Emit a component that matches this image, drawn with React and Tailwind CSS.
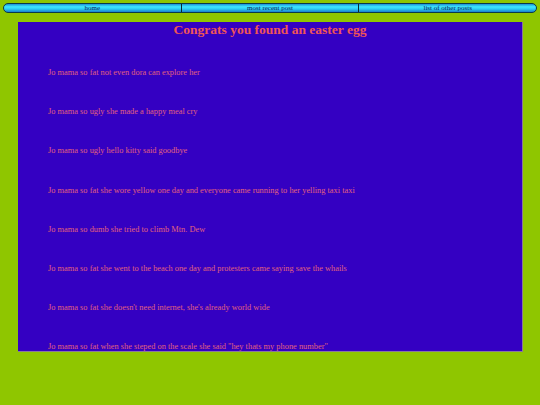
import React from 'react';

const LINKS = ['home', 'most recent post', 'list of other posts'];

const JOKES = [
  'Jo mama so fat not even dora can explore her',
  'Jo mama so ugly she made a happy meal cry',
  'Jo mama so ugly hello kitty said goodbye',
  'Jo mama so fat she wore yellow one day and everyone came running to her yelling taxi taxi',
  'Jo mama so dumb she tried to climb Mtn. Dew',
  'Jo mama so fat she went to the beach one day and protesters came saying save the whails',
  "Jo mama so fat she doesn't need internet, she's already world wide",
  'Jo mama so fat when she steped on the scale she said "hey thats my phone number"',
];

export default function App() {
  return (
    <div
      className="min-h-[405px] w-[540px] bg-[#8fc600] pt-[3px]"
      style={{ fontFamily: '"Liberation Serif", "Times New Roman", serif' }}
    >
      {/* top nav bar */}
      <div className="mx-[3px] flex h-[10px] overflow-hidden rounded-full border border-[#0b3a4a] bg-[linear-gradient(to_bottom,#1c8fd6_0%,#3ee8ff_35%,#2fd0f4_60%,#1a7fd0_100%)]">
        {LINKS.map((l, i) => (
          <div
            key={l}
            className={`flex flex-1 items-center justify-center text-[7px] leading-none text-[#0a1f5a] ${
              i < LINKS.length - 1 ? 'border-r border-[#0b2a30]' : ''
            }`}
          >
            {l}
          </div>
        ))}
      </div>

      {/* main panel */}
      <div className="mx-[18px] mt-[9px] h-[330px] w-[505px] overflow-hidden border-r border-b border-[#8a7a9a] bg-[#3400c2]">
        <h1 className="mt-0 text-center text-[13.5px] font-bold leading-[16px] text-[#f05656]">
          Congrats you found an easter egg
        </h1>
        <div className="mt-[30px] pl-[30px]">
          {JOKES.map((j) => (
            <p key={j} className="mb-[29.2px] h-[10px] text-[8.4px] leading-[10px] text-[#e0607e]">
              {j}
            </p>
          ))}
        </div>
      </div>
    </div>
  );
}
